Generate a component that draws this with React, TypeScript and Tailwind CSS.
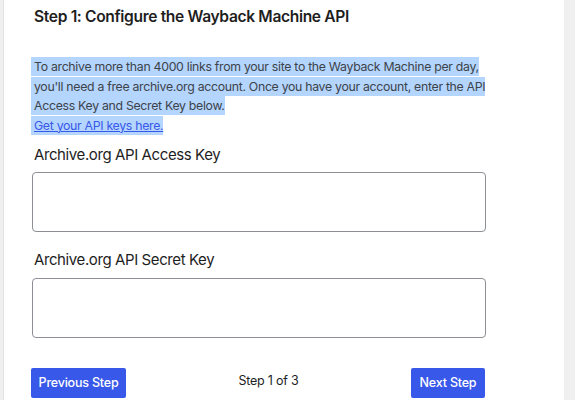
export default function App() {
  return (
    <div className="h-[400px] w-[575px] overflow-hidden bg-[#f0f0f1] pl-[3px] pr-[11px] font-['Inter',sans-serif]">
      <div className="h-full border-l border-[#e2e2e4] bg-white pl-[27px] pt-[5px]">
        <h2 className="pl-[3px] text-[15.6px] font-semibold leading-[24px] tracking-[-0.35px] text-[#1e1e1e]">
          Step 1: Configure the Wayback Machine API
        </h2>
        <p className="mt-[28px] w-[458px] text-[12.3px] leading-[19.5px] tracking-[-0.3px] text-[#3c434a]">
          <span className="bg-[#b4d5fd] py-[2px] pl-[3px] box-decoration-clone">
            To archive more than 4000 links from your site to the Wayback Machine per day,
            you'll need a free archive.org account. Once you have your account, enter the API
            Access Key and Secret Key below.
          </span>
          <br />
          <span className="bg-[#b4d5fd] py-[2px] pl-[3px] box-decoration-clone">
            <a href="#" className="text-[#3858e9] underline">
              Get your API keys here.
            </a>
          </span>
        </p>
        <label className="mt-[10px] block pl-[3px] text-[15px] leading-[20px] tracking-[-0.4px] text-[#1e1e1e]">
          Archive.org API Access Key
        </label>
        <input
          type="text"
          className="ml-[1px] mt-[7px] block h-[60px] w-[454px] rounded-[4px] border border-[#8c8f94] bg-white"
        />
        <label className="mt-[18px] block pl-[3px] text-[15px] leading-[20px] tracking-[-0.4px] text-[#1e1e1e]">
          Archive.org API Secret Key
        </label>
        <input
          type="text"
          className="ml-[1px] mt-[8px] block h-[60px] w-[454px] rounded-[4px] border border-[#8c8f94] bg-white"
        />
        <div className="mt-[30px] flex w-[454px] items-start justify-between">
          <button className="flex h-[30px] w-[95px] items-center justify-center whitespace-nowrap rounded-[2px] bg-[#3858e9] text-[12.5px] font-medium tracking-[-0.2px] text-white">
            Previous Step
          </button>
          <span className="whitespace-nowrap pt-[5px] text-[12.5px] leading-[16px] tracking-[-0.2px] text-[#1e1e1e]">
            Step 1 of 3
          </span>
          <button className="flex h-[30px] w-[74px] items-center justify-center whitespace-nowrap rounded-[2px] bg-[#3858e9] text-[12.5px] font-medium tracking-[-0.2px] text-white">
            Next Step
          </button>
        </div>
      </div>
    </div>
  );
}
